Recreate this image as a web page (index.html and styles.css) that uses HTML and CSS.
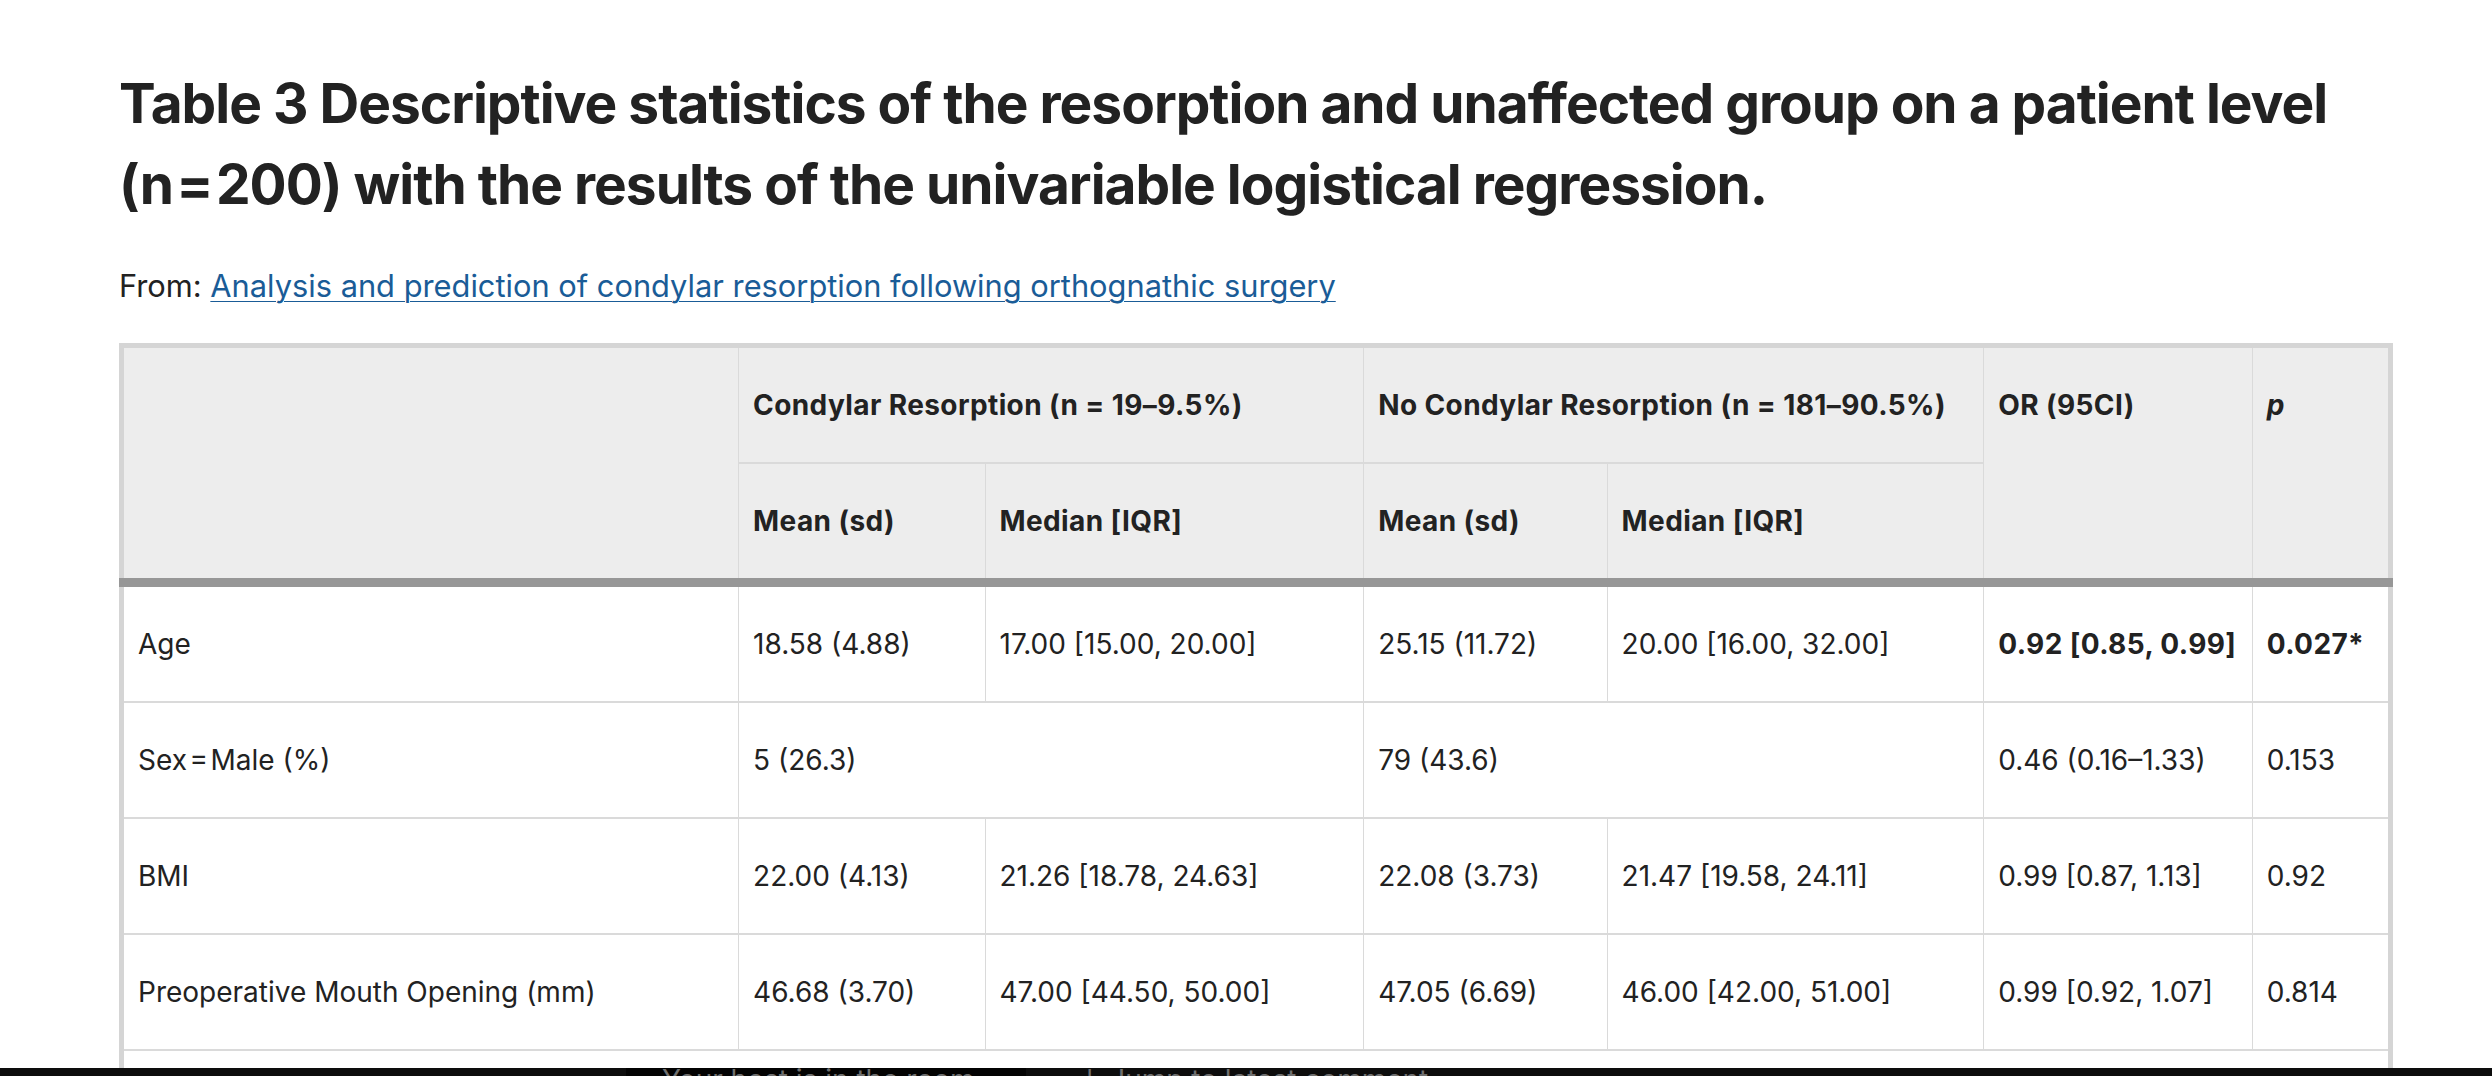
FILE: index.html
```html
<!DOCTYPE html>
<html lang="en">
<head>
<meta charset="utf-8">
<title>Table 3</title>
<link rel="stylesheet" href="styles.css">
</head>
<body>
<main class="page">
  <h1 class="title">Table 3 Descriptive statistics of the resorption and unaffected group on a patient level (n&#8202;=&#8202;200) with the results of the univariable logistical regression.</h1>
  <p class="source">From: <a class="source-link" href="#">Analysis and prediction of condylar resorption following orthognathic surgery</a></p>
  <table class="data">
    <colgroup>
      <col class="c1"><col class="c2"><col class="c3"><col class="c4"><col class="c5"><col class="c6"><col class="c7">
    </colgroup>
    <thead>
      <tr>
        <th rowspan="2" class="hb"></th>
        <th colspan="2">Condylar Resorption (n = 19–9.5%)</th>
        <th colspan="2">No Condylar Resorption (n = 181–90.5%)</th>
        <th rowspan="2" class="hb">OR (95CI)</th>
        <th rowspan="2" class="hb last"><em>p</em></th>
      </tr>
      <tr>
        <th class="hb">Mean (sd)</th>
        <th class="hb">Median [IQR]</th>
        <th class="hb">Mean (sd)</th>
        <th class="hb">Median [IQR]</th>
      </tr>
    </thead>
    <tbody>
      <tr>
        <td>Age</td>
        <td>18.58 (4.88)</td>
        <td>17.00 [15.00, 20.00]</td>
        <td>25.15 (11.72)</td>
        <td>20.00 [16.00, 32.00]</td>
        <td class="strong">0.92 [0.85, 0.99]</td>
        <td class="strong last">0.027*</td>
      </tr>
      <tr>
        <td>Sex&#8202;=&#8202;Male (%)</td>
        <td colspan="2">5 (26.3)</td>
        <td colspan="2">79 (43.6)</td>
        <td>0.46 (0.16–1.33)</td>
        <td class="last">0.153</td>
      </tr>
      <tr>
        <td>BMI</td>
        <td>22.00 (4.13)</td>
        <td>21.26 [18.78, 24.63]</td>
        <td>22.08 (3.73)</td>
        <td>21.47 [19.58, 24.11]</td>
        <td>0.99 [0.87, 1.13]</td>
        <td class="last">0.92</td>
      </tr>
      <tr>
        <td>Preoperative Mouth Opening (mm)</td>
        <td>46.68 (3.70)</td>
        <td>47.00 [44.50, 50.00]</td>
        <td>47.05 (6.69)</td>
        <td>46.00 [42.00, 51.00]</td>
        <td>0.99 [0.92, 1.07]</td>
        <td class="last">0.814</td>
      </tr>
    </tbody>
    <tfoot>
      <tr>
        <td colspan="7" class="foot">* Statistically significant (p &lt; 0.05)</td>
      </tr>
    </tfoot>
  </table>
</main>
<div class="overlay-bar">
  <div class="bar-seg bar-left"></div>
  <div class="bar-seg bar-mid"><span class="bar-text">Your host is in the room</span></div>
  <div class="bar-seg bar-right"><span class="bar-text">↓ Jump to latest comment</span></div>
</div>
</body>
</html>
```
FILE: styles.css
```css
html, body {
  margin: 0;
  padding: 0;
  background: #ffffff;
}

body {
  color: #222222;
  font-family: Inter, "Liberation Sans", sans-serif;
}

.page {
  width: 2274px;
  padding: 63px 0 40px 119px;
}

.title {
  margin: 0;
  font-size: 55px;
  line-height: 81px;
  font-weight: 700;
  letter-spacing: -1px;
}

.source {
  margin: 41px 0 37px 0;
  font-size: 30.8px;
  line-height: 40px;
}

.source-link {
  color: #1a5c97;
  text-decoration: underline;
  text-underline-offset: 4px;
  text-decoration-thickness: 1px;
}

.data {
  width: 2274px;
  table-layout: fixed;
  border-collapse: collapse;
  border: 5px solid #d5d5d5;
  font-size: 28px;
  line-height: 40px;
}

.c1 { width: 616px; }
.c2 { width: 246px; }
.c3 { width: 378px; }
.c4 { width: 243px; }
.c5 { width: 376px; }
.c6 { width: 268px; }
.c7 { width: 138px; }

.data th,
.data td {
  padding: 37px 14px 37px 14px;
  text-align: left;
  vertical-align: top;
  border-right: 1px solid #dadada;
  border-bottom: 2px solid #dadada;
  white-space: nowrap;
}

.data th {
  background: #ededed;
  font-weight: 700;
  letter-spacing: 0.4px;
}

.data th.hb {
  border-bottom: 9px solid #979797;
}

.data td {
  font-weight: 400;
}

.data td.strong {
  font-weight: 700;
  letter-spacing: 0.4px;
}

.data em {
  font-style: italic;
}

.data td.foot {
  border-right: none;
  color: #222222;
}

.overlay-bar {
  position: fixed;
  left: 0;
  right: 0;
  bottom: 0;
  height: 8px;
  overflow: hidden;
  display: flex;
  background: #0d0d0d;
}

.bar-seg {
  height: 100%;
  overflow: hidden;
  position: relative;
}

.bar-left {
  width: 626px;
}

.bar-mid {
  width: 400px;
  background: #030303;
}

.bar-right {
  flex: 1;
}

.bar-text {
  position: absolute;
  top: -2px;
  left: 36px;
  font-size: 28px;
  line-height: 28px;
  color: #6f6f6f;
  white-space: nowrap;
}

.bar-right .bar-text {
  left: 52px;
}
```
